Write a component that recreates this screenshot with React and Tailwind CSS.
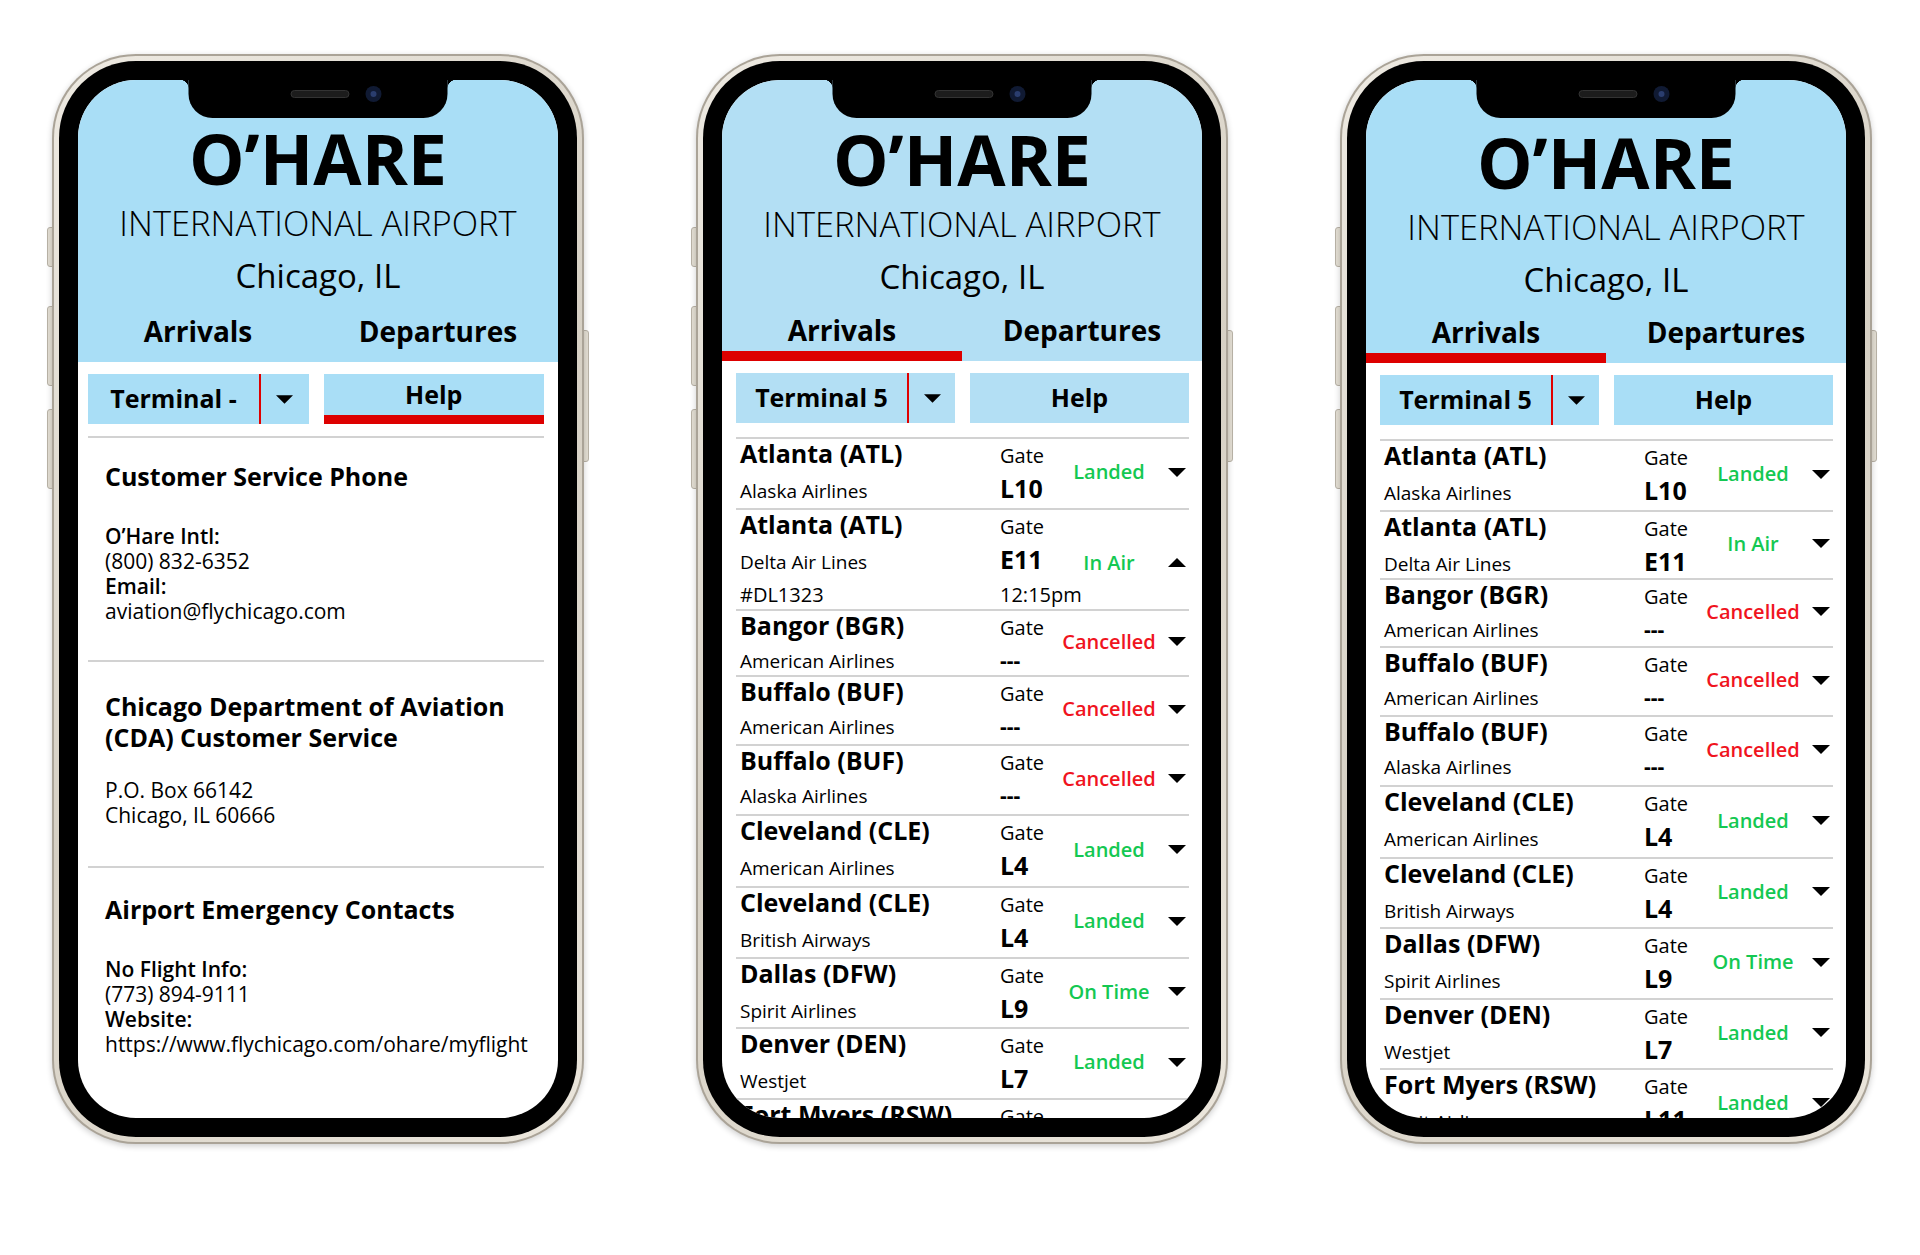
import React from "react";

const flights = [
  { city: "Atlanta (ATL)", airline: "Alaska Airlines", gate: "L10", status: "Landed", red: false },
  { city: "Atlanta (ATL)", airline: "Delta Air Lines", gate: "E11", status: "In Air", red: false, extra: ["#DL1323", "12:15pm"] },
  { city: "Bangor (BGR)", airline: "American Airlines", gate: "---", status: "Cancelled", red: true },
  { city: "Buffalo (BUF)", airline: "American Airlines", gate: "---", status: "Cancelled", red: true },
  { city: "Buffalo (BUF)", airline: "Alaska Airlines", gate: "---", status: "Cancelled", red: true },
  { city: "Cleveland (CLE)", airline: "American Airlines", gate: "L4", status: "Landed", red: false },
  { city: "Cleveland (CLE)", airline: "British Airways", gate: "L4", status: "Landed", red: false },
  { city: "Dallas (DFW)", airline: "Spirit Airlines", gate: "L9", status: "On Time", red: false },
  { city: "Denver (DEN)", airline: "Westjet", gate: "L7", status: "Landed", red: false },
  { city: "Fort Myers (RSW)", airline: "Spirit Airlines", gate: "L11", status: "Landed", red: false },
];

const heights2 = ["h-[71px]", "h-[101px]", "h-[66px]", "h-[69px]", "h-[70px]", "h-[72px]", "h-[71px]", "h-[70px]", "h-[71px]", "h-[70px]"];
const heights3 = ["h-[71px]", "h-[68px]", "h-[68px]", "h-[69px]", "h-[70px]", "h-[72px]", "h-[70px]", "h-[71px]", "h-[70px]", "h-[70px]"];

function Tri({ up = false, w = 18, h = 9 }) {
  return (
    <svg width={w} height={h} viewBox="0 0 18 9" className="block">
      <path d={up ? "M0 9 L9 0 L18 9 Z" : "M0 0 L18 0 L9 9 Z"} fill="#000" />
    </svg>
  );
}

function Phone({ children }) {
  return (
    <div className="relative w-[532px] h-[1090px] shrink-0">
      <div className="absolute left-[-5px] top-[173px] w-[8px] h-[40px] rounded-l-[3px] bg-[#e4dfd4] border border-[#b9b3a7]" />
      <div className="absolute left-[-5px] top-[252px] w-[8px] h-[80px] rounded-l-[3px] bg-[#e4dfd4] border border-[#b9b3a7]" />
      <div className="absolute left-[-5px] top-[355px] w-[8px] h-[80px] rounded-l-[3px] bg-[#e4dfd4] border border-[#b9b3a7]" />
      <div className="absolute right-[-5px] top-[276px] w-[8px] h-[132px] rounded-r-[3px] bg-[#e4dfd4] border border-[#b9b3a7]" />
      <div className="relative h-full rounded-[84px] bg-[#aaa397] p-[2px] shadow-[0_2px_6px_rgba(0,0,0,0.2)]">
        <div className="h-full rounded-[82px] bg-[linear-gradient(135deg,#eeeae2,#d6d0c4_50%,#ebe6dc)] p-[5px]">
          <div className="h-full rounded-[77px] bg-black p-[19px]">
            <div className="relative h-full rounded-[58px] overflow-hidden bg-white">
              {children}
              <div className="absolute top-0 left-1/2 -translate-x-1/2 w-[259px] h-[38px] bg-black rounded-b-[24px]">
                <div className="absolute left-[-9px] top-0 w-[9px] h-[9px] bg-[radial-gradient(circle_at_0_100%,transparent_9px,#000_9.5px)]" />
                <div className="absolute right-[-9px] top-0 w-[9px] h-[9px] bg-[radial-gradient(circle_at_100%_100%,transparent_9px,#000_9.5px)]" />
                <div className="absolute left-[102px] top-[10px] w-[59px] h-[8px] rounded-full bg-[#1c1c1c] border border-[#333]" />
                <div className="absolute left-[177px] top-[6px] w-[16px] h-[16px] rounded-full bg-[#101a33] flex items-center justify-center">
                  <div className="w-[6px] h-[6px] rounded-full bg-[#2a3d6e]" />
                </div>
              </div>
            </div>
          </div>
        </div>
      </div>
    </div>
  );
}

function Header({ bg, hClass, ptClass, active }) {
  return (
    <div className={`flex flex-col items-center text-black ${bg} ${hClass}`}>
      <div className={`${ptClass} text-[70px] leading-[70px] font-bold`}>O’HARE</div>
      <div className="mt-[12px] text-[34.5px] leading-[35px] font-light">INTERNATIONAL AIRPORT</div>
      <div className="mt-[19px] text-[33px] leading-[33px]">Chicago, IL</div>
      <div className="mt-auto w-full grid grid-cols-2">
        <div className="flex flex-col items-center">
          <span className="text-[28px] leading-[28px] font-bold">Arrivals</span>
          <div className={`mt-[7px] h-[10px] w-full ${active ? "bg-[#dd0000]" : ""}`} />
        </div>
        <div className="flex flex-col items-center">
          <span className="text-[28px] leading-[28px] font-bold">Departures</span>
          <div className="mt-[7px] h-[10px] w-full" />
        </div>
      </div>
    </div>
  );
}

function Controls({ bg, terminal, helpActive }) {
  return (
    <div className="mt-[12px] grid grid-cols-2 gap-[15px] h-[50px]">
      <div className={`flex ${bg}`}>
        <div className="w-[171px] flex items-center justify-center text-[25px] font-bold">{terminal}</div>
        <div className="w-[2px] bg-[#e00000]" />
        <div className="flex-1 flex items-center justify-center">
          <Tri w={17} h={9} />
        </div>
      </div>
      <div className={`flex flex-col ${bg}`}>
        <div className="flex-1 flex items-center justify-center text-[25px] font-bold">Help</div>
        {helpActive && <div className="h-[9px] bg-[#dd0000]" />}
      </div>
    </div>
  );
}

function Row({ f, hClass, expanded }) {
  return (
    <div className={`flex border-t-2 border-[#d2d2d2] ${hClass}`}>
      <div className="w-[318px] shrink-0">
        <div className="flex items-baseline h-[28px]">
          <div className="w-[264px] shrink-0 pl-[4px] text-[25px] leading-[28px] font-bold whitespace-nowrap">{f.city}</div>
          <div className="text-[20px] leading-[28px] whitespace-nowrap">Gate</div>
        </div>
        <div className="mt-[6px] flex items-baseline h-[30px]">
          <div className="w-[264px] shrink-0 pl-[4px] text-[19px] leading-[30px] whitespace-nowrap">{f.airline}</div>
          <div className={`${f.gate === "---" ? "text-[21px]" : "text-[25px]"} leading-[30px] font-bold whitespace-nowrap`}>{f.gate}</div>
        </div>
        {expanded && f.extra && (
          <div className="mt-[8px] flex items-baseline h-[25px]">
            <div className="w-[264px] shrink-0 pl-[4px] text-[20px] leading-[25px]">{f.extra[0]}</div>
            <div className="text-[20px] leading-[25px] whitespace-nowrap">{f.extra[1]}</div>
          </div>
        )}
      </div>
      <div className={`w-[110px] shrink-0 flex items-center justify-center text-[20px] font-semibold whitespace-nowrap ${expanded ? "pt-[6px]" : "pb-[3px]"} ${f.red ? "text-[#f0141e]" : "text-[#14c852]"}`}>
        {f.status}
      </div>
      <div className={`w-[25px] shrink-0 flex items-center justify-center ${expanded ? "pt-[6px]" : "pb-[3px]"}`}>
        <Tri up={expanded} />
      </div>
    </div>
  );
}

function HelpScreen() {
  const bg = "bg-[#a9def6]";
  return (
    <div>
      <Header bg={bg} hClass="h-[282px]" ptClass="pt-[43px]" active={false} />
      <div className="pl-[10px] pr-[14px]">
        <Controls bg={bg} terminal="Terminal -" helpActive />
        <div className="mt-[12px] border-t-2 border-[#d2d2d2] pl-[17px] pt-[23px] pb-[36px]">
          <div className="text-[25px] leading-[31px] font-bold">Customer Service Phone</div>
          <div className="mt-[32px] text-[21px] leading-[25px]">
            <div className="font-semibold">O’Hare Intl:</div>
            <div>(800) 832-6352</div>
            <div className="font-semibold">Email:</div>
            <div>aviation@flychicago.com</div>
          </div>
        </div>
        <div className="border-t-2 border-[#d2d2d2] pl-[17px] pt-[29px] pb-[38px]">
          <div className="text-[25px] leading-[31px] font-bold">Chicago Department of Aviation</div>
          <div className="text-[25px] leading-[31px] font-bold">(CDA) Customer Service</div>
          <div className="mt-[25px] text-[21px] leading-[25px]">
            <div>P.O. Box 66142</div>
            <div>Chicago, IL 60666</div>
          </div>
        </div>
        <div className="border-t-2 border-[#d2d2d2] pl-[17px] pt-[26px]">
          <div className="text-[25px] leading-[31px] font-bold">Airport Emergency Contacts</div>
          <div className="mt-[32px] text-[21px] leading-[25px]">
            <div className="font-semibold">No Flight Info:</div>
            <div>(773) 894-9111</div>
            <div className="font-semibold">Website:</div>
            <div className="whitespace-nowrap">https://www.flychicago.com/ohare/myflight</div>
          </div>
        </div>
      </div>
    </div>
  );
}

function ListScreen({ bg, hClass, ptClass, heights, expandedIndex, dividerMt }) {
  return (
    <div>
      <Header bg={bg} hClass={hClass} ptClass={ptClass} active />
      <div className="pl-[14px] pr-[13px]">
        <Controls bg={bg} terminal="Terminal 5" helpActive={false} />
        <div className={dividerMt}>
          {flights.map((f, i) => (
            <Row key={i} f={f} hClass={heights[i]} expanded={i === expandedIndex} />
          ))}
        </div>
      </div>
    </div>
  );
}

export default function App() {
  return (
    <div className="w-[1920px] h-[1255px] bg-white overflow-hidden font-['Open_Sans','Noto_Sans',sans-serif] text-black">
      <div className="flex gap-[112px] pl-[52px] pt-[54px]">
        <Phone>
          <HelpScreen />
        </Phone>
        <Phone>
          <ListScreen bg="bg-[#b3dff4]" hClass="h-[281px]" ptClass="pt-[44px]" heights={heights2} expandedIndex={1} dividerMt="mt-[14px]" />
        </Phone>
        <Phone>
          <ListScreen bg="bg-[#a9def6]" hClass="h-[283px]" ptClass="pt-[47px]" heights={heights3} expandedIndex={-1} dividerMt="mt-[14px]" />
        </Phone>
      </div>
    </div>
  );
}
